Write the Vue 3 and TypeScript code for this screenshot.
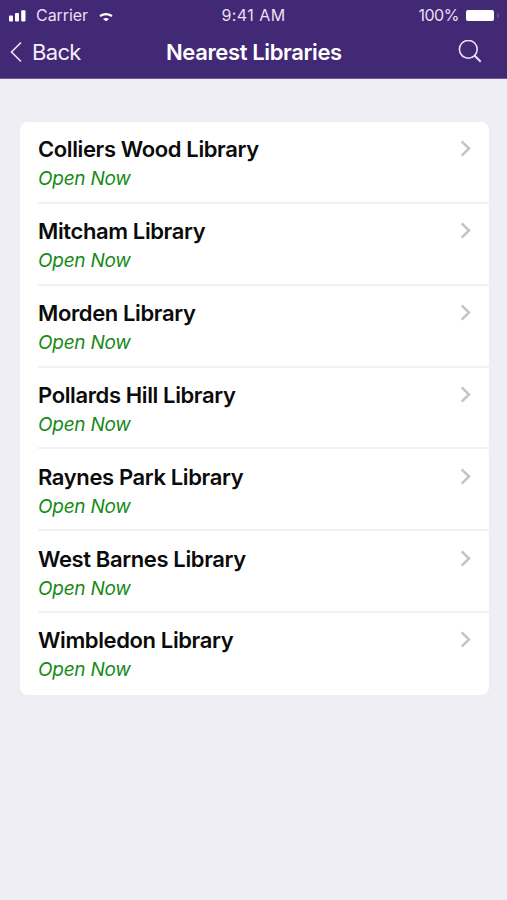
<script setup lang="ts">
const libraries: string[] = [
  'Colliers Wood Library',
  'Mitcham Library',
  'Morden Library',
  'Pollards Hill Library',
  'Raynes Park Library',
  'West Barnes Library',
  'Wimbledon Library',
]
</script>

<template>
  <main class="screen">
    <header class="top">
      <div class="status">
        <div class="carrier">
          <svg class="signal" width="17" height="12" viewBox="0 0 17 12" fill="#fff"><rect x="0" y="5.500" width="4" height="6" rx="1"/><rect x="6" y="3" width="4" height="8.500" rx="1"/><rect x="12.200" y="0.300" width="4.300" height="11.200" rx="1"/></svg>
          <span>Carrier</span>
          <svg class="wifi" width="14" height="10" viewBox="0 0 14 10"><path d="M1 4Q7 .2 13 4" fill="none" stroke="#fff" stroke-width="2.200"/><path d="M4 7Q7 4.800 10 7L7 9.300Z" fill="#fff"/></svg>
        </div>
        <span class="time">9:41 AM</span>
        <div class="power"><span>100%</span><i class="battery"></i><i class="terminal"></i></div>
      </div>
      <nav class="nav">
        <button class="back"><svg width="12" height="22" viewBox="0 0 12 22" fill="none" stroke="#eee3f8" stroke-width="1.600"><path d="M11 1.500 1.500 11 11 20.500"/></svg><span>Back</span></button>
        <h1>Nearest Libraries</h1>
        <button class="search" aria-label="Search"><svg width="24" height="24" viewBox="0 0 24 24" fill="none" stroke="#eadff5" stroke-width="1.600"><circle cx="10.300" cy="9.300" r="8.900"/><path d="m16.500 15.500 6.200 6.200" stroke-width="2"/></svg></button>
      </nav>
    </header>
    <ul class="list">
      <li v-for="library in libraries" :key="library">
        <div class="row">
          <div><h2>{{ library }}</h2><p>Open Now</p></div>
          <svg class="chevron" width="11" height="17" viewBox="0 0 11 17" fill="none" stroke="#c4c4c7" stroke-width="2.500"><path d="m1.700 1.300 7.300 7.200-7.300 7.200"/></svg>
        </div>
      </li>
    </ul>
  </main>
</template>

<style>
body { margin: 0; background: #efeef4; }
</style>
<style scoped>
* { box-sizing: border-box; }
.screen { min-height: 900px; background: #efeef4; font-family: Inter, sans-serif; }
.top { height: 79px; background: #422976; color: #fff; border-bottom: 1px solid #6f5b97; }
.status, .nav { display: grid; grid-template-columns: 1fr auto 1fr; align-items: center; }
.status { height: 30px; padding: 0 9px; font-size: 16px; color: #eadff3; }
.carrier, .power, .back { display: flex; align-items: center; }
.carrier span { margin: 0 11px 0 10px; letter-spacing: -.05px; }
.signal { margin-top: 1px; }
.wifi { margin-top: 3px; }
.time { letter-spacing: .45px; }
.power { justify-content: flex-end; letter-spacing: -.45px; }
.battery { width: 28px; height: 11px; margin-left: 7px; border-radius: 2px; background: #fff; }
.terminal { width: 2px; height: 5px; margin-left: 3px; border-radius: 0 2px 2px 0; background: #655080; margin-right: -1px; }
.nav { height: 44px; padding: 0 25px 0 10px; grid-template-columns: 156px 177px 1fr; }
button { padding: 0; border: 0; background: none; color: inherit; font: inherit; }
.back { gap: 10px; font-size: 22px; letter-spacing: -.65px; color: #f5edfa; }
.search { justify-self: end; display: flex; }
h1, h2, p, ul { margin: 0; padding: 0; }
h1 { font-size: 22px; font-weight: 600; letter-spacing: -.37px; white-space: nowrap; }
.list { margin: 43px 18px 0 20px; background: #fff; border-radius: 8px; list-style: none; }
li { padding-left: 18px; height: 81.85px; }
.row { height: 100%; display: flex; justify-content: space-between; padding: 12.300px 18px 0 0; }
li:not(:last-child) .row { border-bottom: 2px solid #f2f2f3; }
h2 { font-size: 22px; line-height: 31px; font-weight: 600; letter-spacing: -.38px; color: #0b0b0b; }
p { font-size: 19px; line-height: 28px; font-style: italic; letter-spacing: -.25px; color: #168a16; }
.chevron { margin-top: 6px; }
</style>
